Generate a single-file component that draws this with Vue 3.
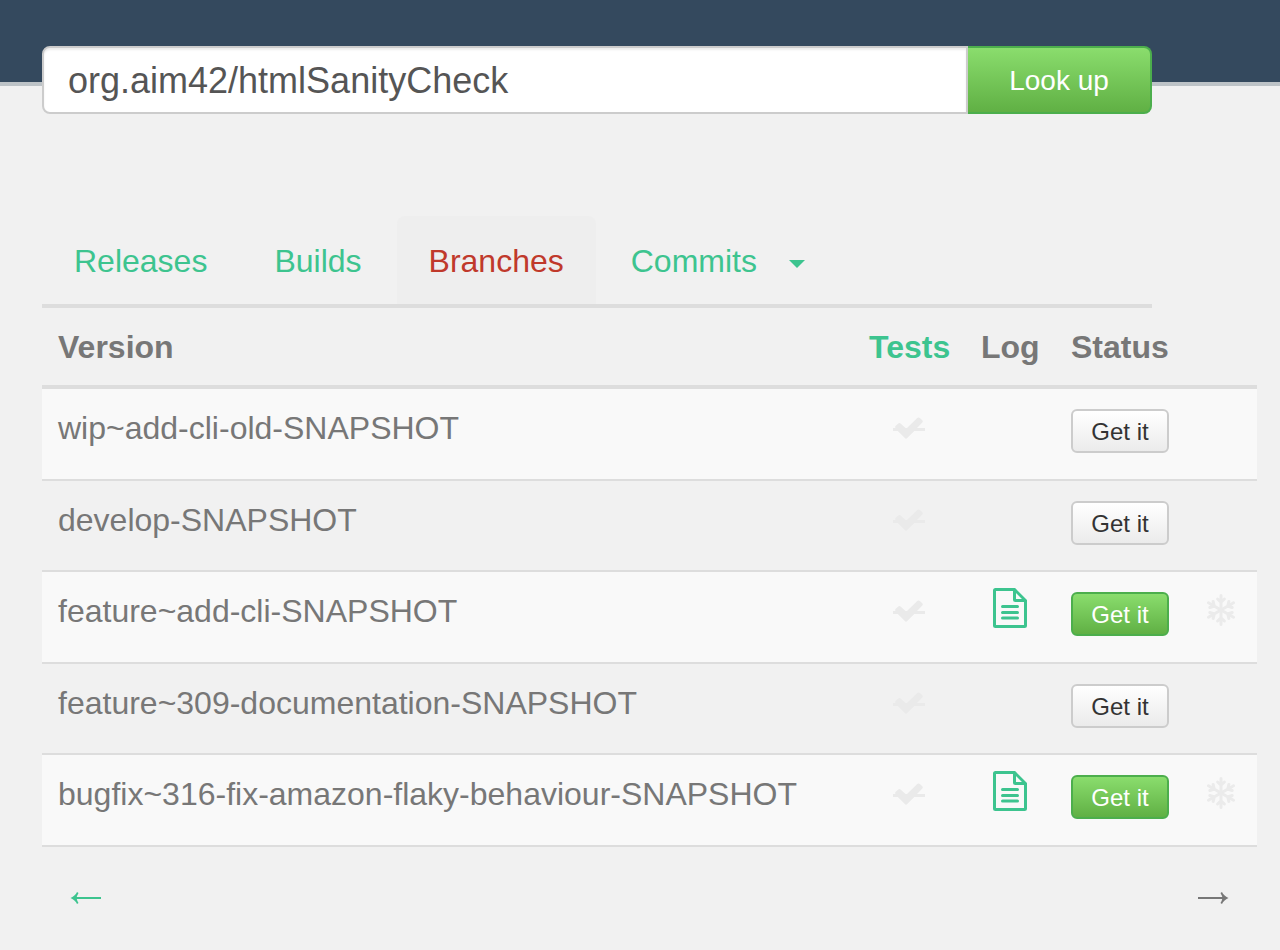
<script setup>
import { ref } from 'vue'

const query = ref('org.aim42/htmlSanityCheck')
const tabs = ['Releases', 'Builds', 'Branches', 'Commits']
const active = ref('Branches')
const rows = [
  { version: 'wip~add-cli-old-SNAPSHOT', built: false },
  { version: 'develop-SNAPSHOT', built: false },
  { version: 'feature~add-cli-SNAPSHOT', built: true },
  { version: 'feature~309-documentation-SNAPSHOT', built: false },
  { version: 'bugfix~316-fix-amazon-flaky-behaviour-SNAPSHOT', built: true },
]
const arms = [0, 60, 120, 180, 240, 300]
</script>

<template>
  <div class="page">
    <header class="band"></header>
    <main class="content">
      <form class="lookup" @submit.prevent>
        <input v-model="query" type="text" class="query" aria-label="Repository" />
        <button type="submit" class="go">Look up</button>
      </form>

      <nav class="tabs">
        <a
          v-for="tab in tabs"
          :key="tab"
          href="#"
          class="tab"
          :class="{ active: tab === active }"
          @click.prevent="active = tab"
        >{{ tab }}<span v-if="tab === 'Commits'" class="caret"></span></a>
      </nav>

      <div class="results">
        <table>
          <thead>
            <tr>
              <th class="version">Version</th>
              <th class="tests"><a href="#">Tests</a></th>
              <th class="log">Log</th>
              <th class="status">Status</th>
              <th class="extra"></th>
            </tr>
          </thead>
          <tbody>
            <tr v-for="row in rows" :key="row.version">
              <td>{{ row.version }}</td>
              <td class="center">
                <svg class="check" viewBox="0 0 32 24" aria-hidden="true">
                  <path d="M0 11H2.500Q1.500 10 2.500 9L5.300 6.600Q6.500 5.600 7.800 6.700L12.500 11H14L24 1.200Q25.500 0 26.800 1L29.300 3.200Q30.300 4.400 29.300 5.600L24 11H32V14H21.300L14 21.300Q13 22.200 12 21.300L4.800 14H0z" />
                </svg>
              </td>
              <td class="center">
                <a v-if="row.built" href="#" class="icon-link" aria-label="Build log">
                  <svg class="file" viewBox="0 0 36 42" aria-hidden="true">
                    <path d="M3.500 2.500H22.500L33.500 13.500V38.500q0 1-1 1H3.500q-1 0-1-1V3.500q0-1 1-1zM22.500 2.500V12.500q0 1 1 1H33.500M10.500 19.500H25.500M10.500 25.500H25.500M10.500 31H25.500" />
                  </svg>
                </a>
              </td>
              <td class="action">
                <button type="button" class="get" :class="{ ready: row.built }">Get it</button>
              </td>
              <td class="center">
                <svg v-if="row.built" class="snow" viewBox="0 0 32 32" aria-hidden="true">
                  <g v-for="a in arms" :key="a" :transform="`rotate(${a} 16 16)`">
                    <path d="M16 16V1.500M12.600 5 16 8.200 19.400 5" />
                  </g>
                </svg>
              </td>
            </tr>
          </tbody>
        </table>
        <nav class="pager" aria-label="Pages">
          <a href="#" class="prev" aria-label="Previous page">
            <svg viewBox="0 0 32 14" aria-hidden="true">
              <path class="shaft" d="M4 7H31" /><path class="head" d="M0.500 7Q5.500 4.500 7 1L8.500 2Q7 4.500 6.500 7 7 9.500 8.500 12L7 13Q5.500 9.500 0.500 7z" />
            </svg>
          </a>
          <a href="#" class="next" aria-label="Next page">
            <svg viewBox="0 0 32 14" aria-hidden="true">
              <path class="shaft" d="M1 7H28" /><path class="head" d="M31.500 7Q26.500 4.500 25 1L23.500 2Q25 4.500 25.500 7 25 9.500 23.500 12L25 13Q26.500 9.500 31.500 7z" />
            </svg>
          </a>
        </nav>
      </div>
    </main>
  </div>
</template>

<style>
body {
  margin: 0;
  background: #f1f1f1;
}
</style>

<style scoped>
.page {
  min-height: 100vh;
  overflow: hidden;
  box-sizing: border-box;
  font-family: "Liberation Sans", Arial, sans-serif;
  font-size: 32px;
  line-height: 40px;
  color: #777;
}
a {
  color: #3dc48f;
  text-decoration: none;
}
.band {
  height: 82px;
  background: #34495e;
  border-bottom: 4px solid #bdc3c7;
}
.content {
  margin: -40px 128px 0 42px;
  position: relative;
}
.lookup {
  display: flex;
  height: 68px;
}
.query {
  flex: 1;
  min-width: 0;
  box-sizing: border-box;
  padding: 2px 24px 0;
  border: 2px solid #ccc;
  border-radius: 8px 0 0 8px;
  background: #fff;
  box-shadow: inset 0 2px 2px rgba(0, 0, 0, 0.075);
  font: 36px "Liberation Sans", Arial, sans-serif;
  color: #555;
  outline: none;
}
.go {
  width: 184px;
  padding: 2px 0 0;
  border: 2px solid #4cae4c;
  border-left: 0;
  border-radius: 0 8px 8px 0;
  background: linear-gradient(#8add6d, #60b044);
  color: #fff;
  font: 28px "Liberation Sans", Arial, sans-serif;
}
.tabs {
  display: flex;
  margin-top: 102px;
  border-bottom: 4px solid #ddd;
}
.tab {
  display: flex;
  align-items: center;
  box-sizing: border-box;
  height: 88px;
  padding: 2px 32px 0;
  margin-right: 3px;
  border-radius: 8px 8px 0 0;
}
.tab.active {
  background: #eee;
  color: #c0392b;
}
.caret {
  margin: 6px 0 0 32px;
  border: 8px solid transparent;
  border-top-color: #3dc48f;
  border-bottom: 0;
}
.results {
  margin-right: -105px;
}
table {
  width: 100%;
  table-layout: fixed;
  border-spacing: 0;
}
th,
td {
  box-sizing: border-box;
  padding: 0 16px;
  text-align: left;
  vertical-align: top;
}
th {
  height: 81px;
  padding-top: 19px;
  border-bottom: 4px solid #ddd;
}
td {
  height: 91px;
  padding-top: 19px;
  border-bottom: 2px solid #ddd;
  white-space: nowrap;
}
tbody tr:nth-child(odd) td {
  height: 92px;
  background: #f9f9f9;
}
.tests {
  width: 112px;
}
.log {
  width: 90px;
}
.status {
  width: 130px;
}
.extra {
  width: 72px;
}
td.center {
  padding-left: 0;
  padding-right: 0;
  text-align: center;
}
svg {
  display: block;
  margin: 0 auto;
}
.check {
  width: 32px;
  height: 24px;
  margin-top: 9px;
  fill: #eaeaea;
}
.icon-link {
  display: block;
}
.file {
  width: 36px;
  height: 42px;
  margin-top: -4px;
  fill: none;
  stroke: #3dc48f;
  stroke-width: 3;
  stroke-linecap: round;
}
.snow {
  width: 32px;
  height: 32px;
  margin-top: 3px;
  fill: none;
  stroke: #ebebeb;
  stroke-width: 3;
  stroke-linecap: round;
}
td.action {
  padding-top: 20px;
}
.get {
  display: block;
  width: 98px;
  height: 44px;
  padding: 2px 0 0;
  border: 2px solid #ccc;
  border-radius: 6px;
  background: linear-gradient(#fff, #ebebeb);
  color: #333;
  font: 24px "Liberation Sans", Arial, sans-serif;
}
.get.ready {
  border-color: #4cae4c;
  background: linear-gradient(#8add6d, #60b044);
  color: #fff;
}
.pager {
  display: flex;
  justify-content: space-between;
  padding: 44px 28px;
}
.pager svg {
  width: 32px;
  height: 14px;
}
.shaft {
  stroke: currentColor;
  stroke-width: 2;
}
.head {
  fill: currentColor;
}
.next {
  color: #777;
}
</style>
